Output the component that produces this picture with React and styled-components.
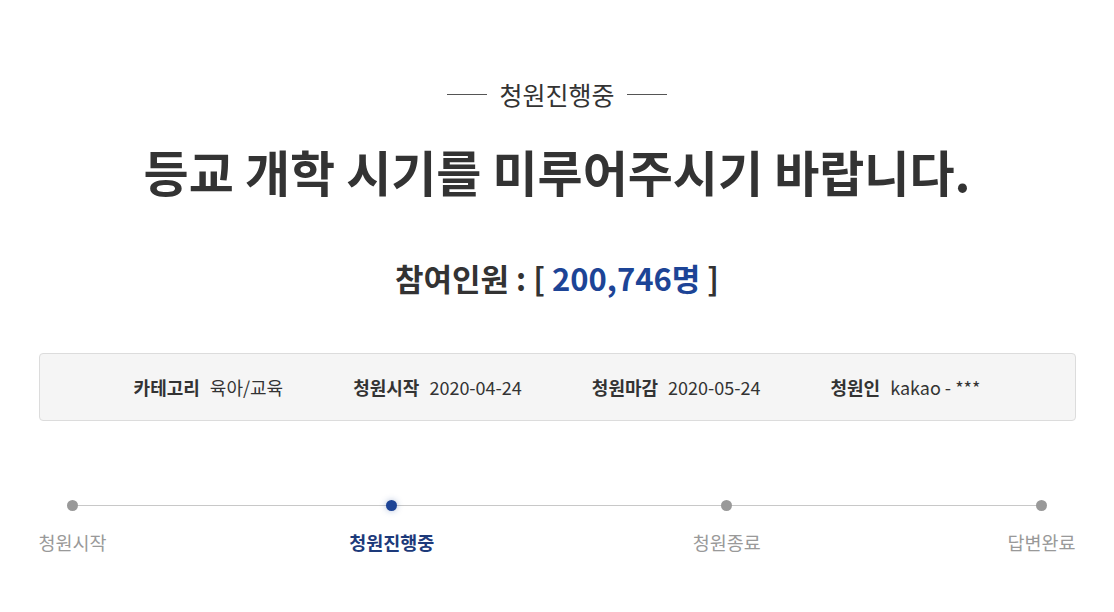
import React from "react";
import styled, { createGlobalStyle } from "styled-components";

const GlobalStyle = createGlobalStyle`
  html, body {
    margin: 0;
    padding: 0;
    background: #fff;
    font-family: "Noto Sans CJK KR", "Noto Sans", sans-serif;
    color: #333;
  }
`;

const Page = styled.div`
  width: 1037px;
  margin: 0 auto;
  padding-top: 76px;
`;

const Status = styled.div`
  display: flex;
  justify-content: center;
  align-items: center;
  gap: 12px;
  font-size: 25px;
  color: #333;
  line-height: 36px;

  &::before,
  &::after {
    content: "";
    width: 40px;
    height: 1px;
    background: #555;
  }
`;

const Title = styled.h1`
  margin: 27px 0 0;
  text-align: center;
  font-size: 49px;
  font-weight: 700;
  line-height: 64px;
  color: #333;
`;

const Count = styled.div`
  margin-top: 53px;
  text-align: center;
  font-size: 31px;
  font-weight: 700;
  line-height: 44px;
  color: #333;
`;

const Num = styled.span`
  color: #1d4496;
`;

const InfoBox = styled.ul`
  margin: 53px 0 0;
  padding: 0;
  list-style: none;
  height: 66px;
  display: flex;
  justify-content: center;
  align-items: center;
  gap: 70px;
  background: #f5f5f5;
  border: 1px solid #dcdcdc;
  border-radius: 4px;
`;

const InfoItem = styled.li`
  display: flex;
  align-items: center;
  gap: 10px;
  font-size: 18px;
  color: #333;
`;

const Label = styled.strong`
  font-weight: 700;
`;

const Progress = styled.div`
  position: relative;
  margin-top: 76px;
  display: flex;
  justify-content: space-between;
`;

const Line = styled.div`
  position: absolute;
  left: 33px;
  right: 35px;
  top: 8px;
  height: 1px;
  background: #c8c8c8;
`;

const Step = styled.div`
  position: relative;
  display: flex;
  flex-direction: column;
  align-items: center;
  gap: 18px;
  margin-left: ${(p) => p.$shift || 0}px;
`;

const Dot = styled.span`
  width: 11px;
  height: 11px;
  border-radius: 50%;
  margin-top: 3px;
  background: ${(p) => (p.$active ? "#1d4496" : "#999")};
  box-shadow: ${(p) => (p.$active ? "0 0 6px rgba(29,68,150,0.35)" : "none")};
`;

const StepLabel = styled.span`
  font-size: 18.5px;
  line-height: 26px;
  color: ${(p) => (p.$active ? "#1d3a7a" : "#999")};
  font-weight: ${(p) => (p.$active ? 700 : 400)};
`;

const steps = [
  { label: "청원시작" },
  { label: "청원진행중", active: true, shift: -4 },
  { label: "청원종료", shift: 12 },
  { label: "답변완료" },
];

const info = [
  ["카테고리", "육아/교육"],
  ["청원시작", "2020-04-24"],
  ["청원마감", "2020-05-24"],
  ["청원인", "kakao - ***"],
];

export default function App() {
  return (
    <>
      <GlobalStyle />
      <Page>
        <Status>청원진행중</Status>
        <Title>등교 개학 시기를 미루어주시기 바랍니다.</Title>
        <Count>
          참여인원 : [ <Num>200,746명</Num> ]
        </Count>
        <InfoBox>
          {info.map(([k, v]) => (
            <InfoItem key={k}>
              <Label>{k}</Label>
              <span>{v}</span>
            </InfoItem>
          ))}
        </InfoBox>
        <Progress>
          <Line />
          {steps.map((s) => (
            <Step key={s.label} $shift={s.shift}>
              <Dot $active={s.active} />
              <StepLabel $active={s.active}>{s.label}</StepLabel>
            </Step>
          ))}
        </Progress>
      </Page>
    </>
  );
}
